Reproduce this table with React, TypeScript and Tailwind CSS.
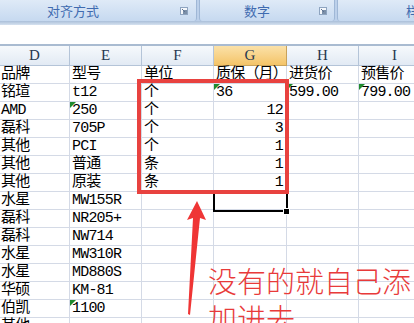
import React from "react";

type Cell = { v: string; right?: boolean; tri?: boolean };

const cols = [
  { key: "D", w: "w-[70px]" },
  { key: "E", w: "w-[72px]" },
  { key: "F", w: "w-[72px]" },
  { key: "G", w: "w-[73px]" },
  { key: "H", w: "w-[72px]" },
  { key: "I", w: "w-[72px]" },
];

const c = (v: string, opts: Partial<Cell> = {}): Cell => ({ v, ...opts });

const rows: Cell[][] = [
  [c("品牌"), c("型号"), c("单位"), c("质保（月）"), c("进货价"), c("预售价")],
  [c("铭瑄"), c("t12"), c("个"), c("36", { tri: true }), c("599.00", { tri: true }), c("799.00", { tri: true })],
  [c("AMD"), c("250", { tri: true }), c("个"), c("12", { right: true }), c(""), c("")],
  [c("磊科"), c("705P"), c("个"), c("3", { right: true }), c(""), c("")],
  [c("其他"), c("PCI"), c("个"), c("1", { right: true }), c(""), c("")],
  [c("其他"), c("普通"), c("条"), c("1", { right: true }), c(""), c("")],
  [c("其他"), c("原装"), c("条"), c("1", { right: true }), c(""), c("")],
  [c("水星"), c("MW155R"), c(""), c(""), c(""), c("")],
  [c("磊科"), c("NR205+"), c(""), c(""), c(""), c("")],
  [c("磊科"), c("NW714"), c(""), c(""), c(""), c("")],
  [c("水星"), c("MW310R"), c(""), c(""), c(""), c("")],
  [c("水星"), c("MD880S"), c(""), c(""), c(""), c("")],
  [c("华硕"), c("KM-81"), c(""), c(""), c(""), c("")],
  [c("伯凯"), c("1100", { tri: true }), c(""), c(""), c(""), c("")],
  [c("其他"), c(""), c(""), c(""), c(""), c("")],
];

function Launcher() {
  return (
    <svg width="8" height="8" viewBox="0 0 8 8" className="shrink-0">
      <rect x="0.5" y="0.5" width="7" height="7" fill="#f4f7fb" stroke="#8ea4c0" />
      <rect x="3" y="3" width="4" height="4" fill="#7b8fa8" />
      <path d="M2 2 L5 5" stroke="#5d7190" strokeWidth="1" />
    </svg>
  );
}

function Ribbon() {
  return (
    <div className="flex h-[21px] bg-[#bcd0ea] text-[13px] text-[#3f6bb0] font-['Noto_Sans_CJK_SC',sans-serif] leading-none">
      <div className="flex items-center w-[197px] bg-gradient-to-b from-[#dfeaf7] to-[#c6d9f0] border-r border-[#9fb7d6] rounded-br-[3px]">
        <span className="ml-[47px]">对齐方式</span>
        <span className="ml-auto mr-[8px]"><Launcher /></span>
      </div>
      <div className="flex items-center w-[136px] ml-[2px] bg-gradient-to-b from-[#dfeaf7] to-[#c6d9f0] border-x border-[#9fb7d6] rounded-b-[3px]">
        <span className="ml-[44px]">数字</span>
        <span className="ml-auto mr-[7px]"><Launcher /></span>
      </div>
      <div className="flex items-center flex-1 ml-[2px] bg-gradient-to-b from-[#dfeaf7] to-[#c6d9f0] border-l border-[#9fb7d6] rounded-bl-[3px] overflow-hidden">
        <span className="ml-[68px] whitespace-nowrap">样式</span>
      </div>
    </div>
  );
}

export default function App() {
  return (
    <div className="relative w-[414px] h-[323px] overflow-hidden bg-white">
      <Ribbon />
      <div className="h-[4px] bg-gradient-to-b from-[#aabfd9] to-[#d6e2f0]" />
      <div className="h-[19px] bg-white" />
      <div className="h-[2px] bg-[#a9bbd1]" />

      {/* column headers */}
      <div className="flex h-[20px] font-['Liberation_Serif',serif] text-[15px] text-[#27384f] leading-none">
        {cols.map((col) => (
          <div
            key={col.key}
            className={`${col.w} shrink-0 flex items-center justify-center border-r border-b ${
              col.key === "G"
                ? "bg-gradient-to-b from-[#fbe1a8] to-[#f4c467] border-[#c8a25b]"
                : "bg-gradient-to-b from-[#f6f9fc] to-[#e2eaf4] border-[#b4c4d8]"
            }`}
          >
            {col.key}
          </div>
        ))}
      </div>

      {/* cells */}
      <div className="font-['Liberation_Mono','Noto_Sans_CJK_SC',monospace] text-[15px] tracking-[-0.8px] text-black leading-none">
        {rows.map((row, ri) => (
          <div key={ri} className="flex h-[18px]">
            {row.map((cell, ci) => (
              <div
                key={ci}
                className={`${cols[ci].w} shrink-0 relative flex items-end pb-[1px] border-r border-b border-[#d4dae6] whitespace-nowrap ${
                  cell.right ? "justify-end pr-[3px]" : ci === 0 ? "pl-[1px]" : "pl-[2px]"
                }`}
              >
                {cell.tri && (
                  <span className="absolute left-0 top-0 w-0 h-0 border-t-[6px] border-r-[6px] border-t-[#1e8a2e] border-r-transparent" />
                )}
                {cell.v}
              </div>
            ))}
          </div>
        ))}
      </div>

      {/* selected cell */}
      <div className="absolute left-[213px] top-[192px] w-[75px] h-[20px] border-2 border-black" />
      <div className="absolute left-[283px] top-[208px] w-[7px] h-[7px] bg-black border border-white" />

      {/* red annotation box */}
      <div className="absolute left-[137px] top-[79px] w-[152px] h-[115px] border-[4px] border-[#e8423f]" />

      {/* arrow */}
      <svg className="absolute left-0 top-0" width="414" height="323" viewBox="0 0 414 323">
        <polygon points="197,201 206,220 200,218 190,315 188,314 193,218 187,220" fill="#ef3535" />
      </svg>

      {/* note */}
      <div className="absolute left-[208px] top-[262px] text-[29px] leading-[37px] text-[#e83a3a] font-['Noto_Sans_CJK_SC',sans-serif] font-light whitespace-nowrap">
        <div>没有的就自己添</div>
        <div>加进去</div>
      </div>
    </div>
  );
}
